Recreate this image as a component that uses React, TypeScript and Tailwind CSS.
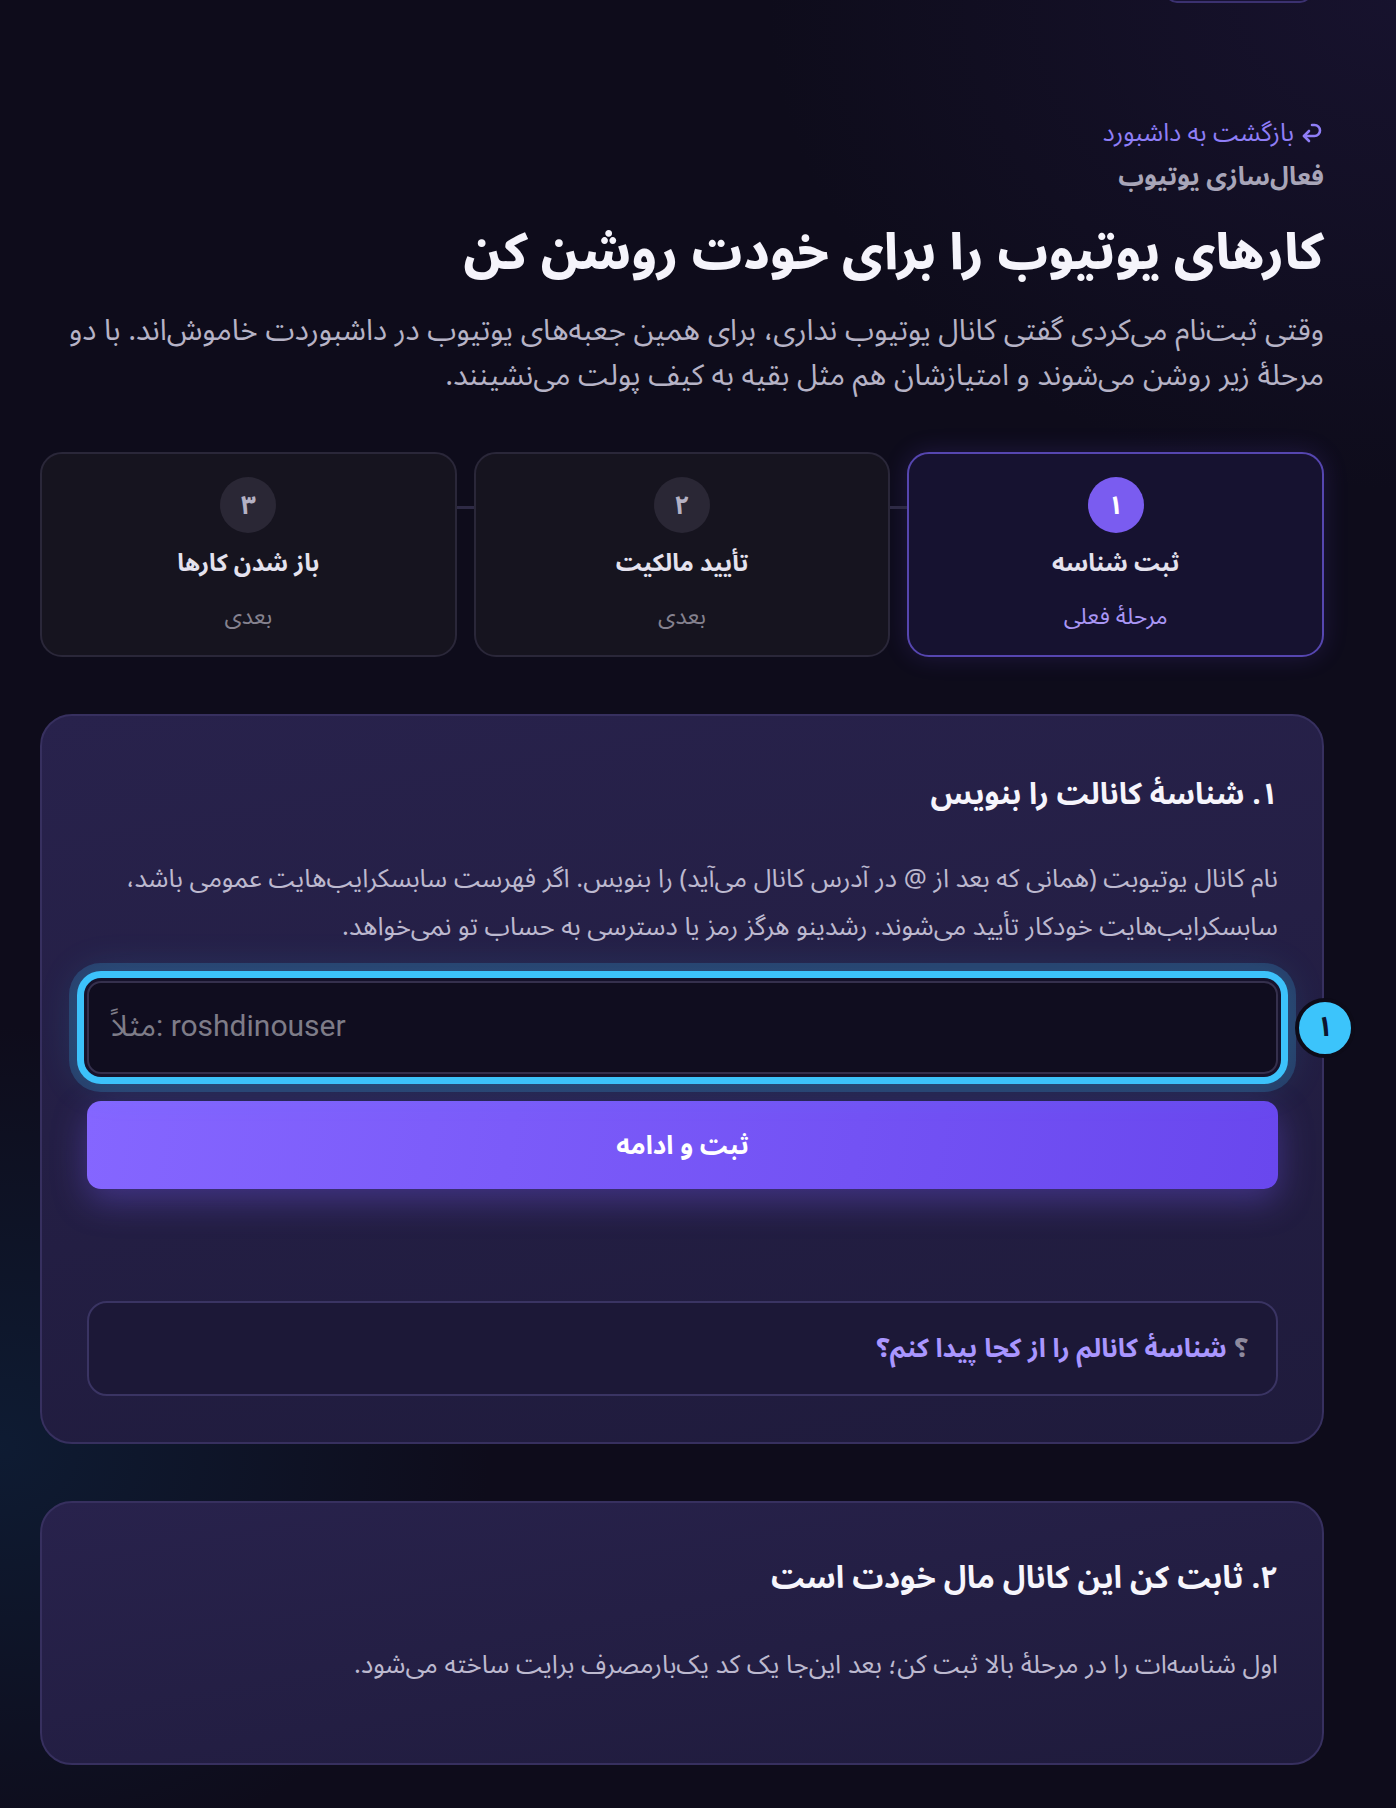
import React from 'react';

const fa = { fontFamily: '"Noto Sans Arabic", "Noto Sans", "DejaVu Sans", sans-serif' };

type Step = { num: string; title: string; sub: string; active?: boolean };

const steps: Step[] = [
  { num: '۱', title: 'ثبت شناسه', sub: 'مرحلهٔ فعلی', active: true },
  { num: '۲', title: 'تأیید مالکیت', sub: 'بعدی' },
  { num: '۳', title: 'باز شدن کارها', sub: 'بعدی' },
];

function StepCard({ step }: { step: Step }) {
  return (
    <div
      className={
        step.active
          ? 'flex-1 h-[205px] rounded-[22px] border-2 border-[#5646b0] bg-[#161230] shadow-[0_0_24px_rgba(110,80,240,0.18)] flex flex-col items-center pt-[23px]'
          : 'flex-1 h-[205px] rounded-[22px] border-2 border-[#2a2739] bg-[#16141f] flex flex-col items-center pt-[23px]'
      }
    >
      <div
        className={
          step.active
            ? 'w-[56px] h-[56px] rounded-full bg-[#7a5cf0] text-white flex items-center justify-center text-[26px] font-bold'
            : 'w-[56px] h-[56px] rounded-full bg-[#2a2735] text-[#b4b1c4] flex items-center justify-center text-[26px] font-bold'
        }
      >
        {step.num}
      </div>
      <div className="mt-[15px] text-[24px] leading-[32px] font-bold text-[#e4e2ee]">{step.title}</div>
      <div
        className={
          step.active
            ? 'mt-[22px] text-[23px] leading-[30px] text-[#a996f5]'
            : 'mt-[22px] text-[23px] leading-[30px] text-[#85828f]'
        }
      >
        {step.sub}
      </div>
    </div>
  );
}

function BackArrow() {
  return (
    <svg width="24" height="24" viewBox="0 0 24 24" fill="none" stroke="currentColor" strokeWidth="2.6" strokeLinecap="round" strokeLinejoin="round">
      <polyline points="9 10 4 15 9 20" />
      <path d="M4 15h10.5a5.5 5.5 0 0 0 0-11H12" />
    </svg>
  );
}

export default function App() {
  return (
    <div
      dir="rtl"
      style={fa}
      className="w-full min-h-[1808px] overflow-hidden bg-[#0e0c1b] bg-[radial-gradient(ellipse_700px_600px_at_0%_80%,rgba(14,40,70,0.55),transparent_70%),radial-gradient(ellipse_900px_700px_at_100%_0%,rgba(40,30,80,0.35),transparent_70%)] pl-[40px] pr-[72px] pb-[42px]"
    >
      {/* top button stub */}
      <div className="flex justify-start pr-[12px]">
        <div className="-mt-[37px] h-[40px] w-[147px] rounded-[12px] border-2 border-[#3b3170] bg-[#171233]" />
      </div>

      <div className="mt-[116px] flex items-center gap-[6px] text-[25px] leading-[28px] text-[#8f7ef7]">
        <BackArrow />
        <span>بازگشت به داشبورد</span>
      </div>
      <div className="mt-[15px] text-[25.5px] leading-[30px] font-bold text-[#a8a5b8]">
        {'فعال\u200cسازی یوتیوب'}
      </div>
      <h1 className="mt-[31px] text-[50px] leading-[60px] font-extrabold text-[#f5f4fb]">
        کارهای یوتیوب را برای خودت روشن کن
      </h1>
      <p className="mt-[25px] text-[29.5px] leading-[45px] text-[#b6b3c6]">
        {'وقتی ثبت\u200cنام می\u200cکردی گفتی کانال یوتیوب نداری، برای همین جعبه\u200cهای یوتیوب در داشبوردت خاموش\u200cاند. با دو مرحلهٔ زیر روشن می\u200cشوند و امتیازشان هم مثل بقیه به کیف پولت می\u200cنشینند.'}
      </p>

      {/* steps */}
      <div className="mt-[54px] flex items-start">
        <StepCard step={steps[0]} />
        <div className="w-[17px] h-[3px] mt-[54px] bg-[#2e2a45]" />
        <StepCard step={steps[1]} />
        <div className="w-[17px] h-[3px] mt-[54px] bg-[#2e2a45]" />
        <StepCard step={steps[2]} />
      </div>

      {/* step 1 card */}
      <section className="mt-[57px] rounded-[32px] border-2 border-[#37305f] bg-[linear-gradient(170deg,#28224c,#1f1b3c)] pt-[57px] pr-[44px] pl-[45px] pb-[46px]">
        <h2 className="text-[30px] leading-[44px] font-bold text-[#f6f5fc]">
          {'۱. شناسهٔ کانالت را بنویس'}
        </h2>
        <p className="mt-[38px] text-[25.7px] leading-[48px] text-[#bdb9cf]">
          {'نام کانال یوتیوبت (همانی که بعد از @ در آدرس کانال می\u200cآید) را بنویس. اگر فهرست سابسکرایب\u200cهایت عمومی باشد، سابسکرایب\u200cهایت خودکار تأیید می\u200cشوند. رشدینو هرگز رمز یا دسترسی به حساب تو نمی\u200cخواهد.'}
        </p>

        <div className="relative mt-[30px]">
          <div className="h-[93px] rounded-[14px] border-2 border-[#35304d] bg-[#100d1f] flex items-center justify-end pl-[22px] pb-[4px] shadow-[0_0_0_3px_#16122b,0_0_0_10px_#3cc2fb,0_0_0_18px_rgba(56,189,248,0.2),0_0_40px_8px_rgba(56,189,248,0.18)]">
            <span
              dir="ltr"
              className="text-[30px] text-[#7e7c88]"
              style={{ fontFamily: 'Roboto, "Noto Sans Arabic", "DejaVu Sans", sans-serif' }}
            >
              {'مثلاً: roshdinouser'}
            </span>
          </div>
          <div className="absolute left-full top-1/2 -translate-y-1/2 ml-[17px] w-[60px] h-[60px] rounded-full border-4 border-[#0d0b18] bg-[#3cc4fb] text-[#0d1530] flex items-center justify-center text-[28px] font-bold">
            ۱
          </div>
        </div>

        <button className="mt-[27px] w-full h-[88px] rounded-[14px] bg-[linear-gradient(100deg,#8566ff,#6947ee)] shadow-[0_12px_34px_rgba(124,92,255,0.35)] text-white text-[26px] font-bold">
          ثبت و ادامه
        </button>

        <div className="mt-[112px] h-[95px] rounded-[20px] border-2 border-[#3a3463] bg-[#1c1837] flex items-center pr-[28px] text-[26px] font-bold">
          <span className="text-[#8e8a9e]">؟</span>
          <span className="mr-[8px] text-[#a996ff]">شناسهٔ کانالم را از کجا پیدا کنم؟</span>
        </div>
      </section>

      {/* step 2 card */}
      <section className="mt-[57px] h-[264px] rounded-[32px] border-2 border-[#37305f] bg-[linear-gradient(170deg,#28224c,#1f1b3c)] pt-[53px] pr-[44px] pl-[45px]">
        <h2 className="text-[31px] leading-[44px] font-bold text-[#f6f5fc]">
          {'۲. ثابت کن این کانال مال خودت است'}
        </h2>
        <p className="mt-[41px] text-[25.7px] leading-[48px] text-[#bdb9cf]">
          {'اول شناسه\u200cات را در مرحلهٔ بالا ثبت کن؛ بعد این\u200cجا یک کد یک\u200cبارمصرف برایت ساخته می\u200cشود.'}
        </p>
      </section>
    </div>
  );
}
